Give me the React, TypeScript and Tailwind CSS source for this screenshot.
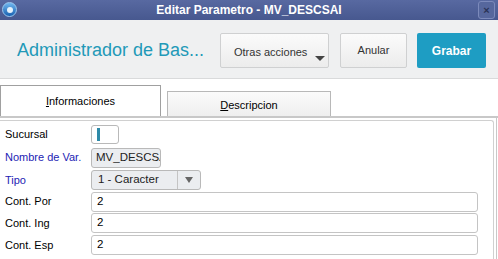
import React from "react";

const Field = ({ label, blue, h, children }: { label: string; blue?: boolean; h: string; children: React.ReactNode }) => (
  <div className={`flex items-center ${h}`}>
    <span className={`w-[91px] shrink-0 pl-[5px] whitespace-nowrap text-[11px] ${blue ? "text-[#2323b4]" : "text-black"}`}>{label}</span>
    {children}
  </div>
);

const App = () => {
  return (
    <div className="w-[498px] h-[259px] overflow-hidden bg-white" style={{ fontFamily: "'Liberation Sans', Arial, sans-serif" }}>
      {/* Barra de titulo */}
      <div className="relative h-[20px] flex items-center justify-center bg-gradient-to-b from-[#5869a1] to-[#47588f]">
        <div className="absolute left-[2px] top-[2px] w-[15px] h-[15px] rounded-full bg-gradient-to-b from-[#6fb6ee] to-[#1561b0] border border-[#9cc7ef] flex items-center justify-center">
          <div className="w-[6px] h-[6px] rounded-full bg-[#e4f1fc]" />
        </div>
        <span className="text-white text-[12px] font-bold">Editar Parametro - MV_DESCSAI</span>
        <div className="absolute right-[3px] top-[1px] w-[17px] h-[18px] rounded-[3px] border border-[#7c8abb] bg-[#56679d] flex items-center justify-center text-[#2a3356] text-[11px] font-bold leading-none">
          ×
        </div>
      </div>

      {/* Cabecera */}
      <div className="h-[59px] bg-[#eff0f1] border-b border-[#d9dadb] flex items-center pl-[17px] pr-[12px]">
        <span className="text-[#2299b8] text-[18px] flex-1 pt-[3px] whitespace-nowrap">Administrador de Bas...</span>
        <div className="relative w-[109px] h-[35px] mt-[3px] rounded-[2px] border border-[#cfd0d1] bg-gradient-to-b from-[#fbfbfb] to-[#ececec] text-[#333] text-[11px] pl-[13px] pt-[10px] whitespace-nowrap">
          Otras acciones
          <span className="absolute right-[3px] bottom-[6px] w-0 h-0 border-l-[5px] border-r-[5px] border-t-[5px] border-l-transparent border-r-transparent border-t-[#444]" />
        </div>
        <div className="ml-[11px] w-[67px] h-[35px] mt-[3px] rounded-[2px] border border-[#cfd0d1] bg-gradient-to-b from-[#fbfbfb] to-[#ececec] text-[#333] text-[11px] flex items-center justify-center">
          Anular
        </div>
        <div className="ml-[10px] w-[69px] h-[35px] mt-[3px] rounded-[2px] bg-[#1e9dc3] text-white text-[12px] font-bold flex items-center justify-center">
          Grabar
        </div>
      </div>

      {/* Pestañas */}
      <div className="flex items-end h-[37px] pt-[6px]">
        <div className="w-[161px] h-[31px] border border-b-0 border-[#a0a0a0] bg-white flex items-center justify-center text-[11px] text-black">
          <span><span className="underline">I</span>nformaciones</span>
        </div>
        <div className="ml-[6px] w-[164px] h-[25px] border border-b-0 border-[#b8b8b8] bg-gradient-to-b from-[#fbfbfb] to-[#efefef] flex items-center justify-center text-[11px] text-black pt-[2px]">
          <span><span className="underline">D</span>escripcion</span>
        </div>
      </div>

      {/* Panel */}
      <div className="border-t-2 border-[#c8c8c8]">
        <div className="w-[497px] border-r border-[#c8c8c8] pr-[2px] pt-[2px]">
          <div className="h-[150px] border-t border-r border-[#d0d0d0] rounded-tr-[3px] flex flex-col pt-[1px] pr-[15px]">
            <Field label="Sucursal" h="h-[24px]">
              <div className="w-[28px] h-[19px] rounded-[3px] border border-[#b9b9b9] bg-white flex items-center pl-[5px]">
                <div className="w-[3px] h-[13px] bg-[#2e8aa8]" />
              </div>
            </Field>
            <Field label="Nombre de Var." blue h="h-[23px]">
              <div className="w-[70px] h-[20px] rounded-[3px] border border-[#b9b9b9] bg-[#ebedf0] text-[11.5px] text-[#222] pl-[4px] flex items-center overflow-hidden whitespace-nowrap">
                MV_DESCSAI
              </div>
            </Field>
            <Field label="Tipo" blue h="h-[22px]">
              <div className="w-[110px] h-[20px] rounded-[3px] border border-[#b9b9b9] bg-[#ebedf0] text-[11.5px] text-[#222] flex items-center">
                <span className="flex-1 pl-[6px] whitespace-nowrap">1 - Caracter</span>
                <span className="w-[23px] h-full border-l border-[#c4c4c4] flex items-center justify-center">
                  <span className="w-0 h-0 border-l-[4px] border-r-[4px] border-t-[6px] border-l-transparent border-r-transparent border-t-[#666]" />
                </span>
              </div>
            </Field>
            <Field label="Cont. Por" h="h-[21px]">
              <div className="flex-1 h-[20px] rounded-[3px] border border-[#c4c4c4] bg-white text-[11.5px] pl-[5px] flex items-center">2</div>
            </Field>
            <Field label="Cont. Ing" h="h-[22px]">
              <div className="flex-1 h-[20px] rounded-[3px] border border-[#c4c4c4] bg-white text-[11.5px] pl-[5px] flex items-center">2</div>
            </Field>
            <Field label="Cont. Esp" h="h-[22px]">
              <div className="flex-1 h-[20px] rounded-[3px] border border-[#c4c4c4] bg-white text-[11.5px] pl-[5px] flex items-center">2</div>
            </Field>
          </div>
        </div>
      </div>
    </div>
  );
};

export default App;
